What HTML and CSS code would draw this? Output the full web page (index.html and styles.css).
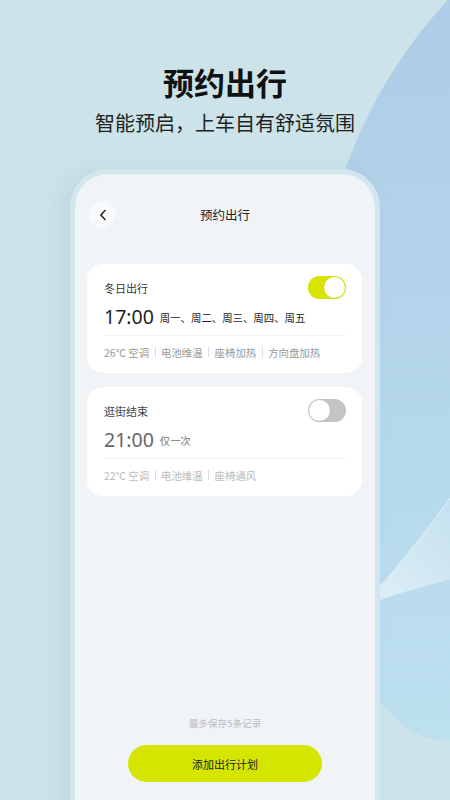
FILE: index.html
```
<!DOCTYPE html>
<html lang="zh-CN">
<head>
<meta charset="utf-8">
<title>预约出行</title>
<link rel="stylesheet" href="styles.css">
</head>
<body>
<div class="page">
  <svg class="bg" width="450" height="800" viewBox="0 0 450 800" aria-hidden="true">
    <defs>
      <linearGradient id="blue" x1="0" y1="0" x2="0" y2="1">
        <stop offset="0" stop-color="#adcde6"/>
        <stop offset="0.6" stop-color="#b6d8ec"/>
        <stop offset="1" stop-color="#bde0ef"/>
      </linearGradient>
      <linearGradient id="streak" x1="0" y1="1" x2="1" y2="0">
        <stop offset="0" stop-color="#ffffff" stop-opacity="0.55"/>
        <stop offset="1" stop-color="#ffffff" stop-opacity="0.15"/>
      </linearGradient>
    </defs>
    <path d="M448 0 C392 60 322 165 316 330 C305 520 340 700 420 735 C435 742 450 742 455 740 L455 0 Z" fill="url(#blue)"/>
    <path d="M375 592 C400 565 430 525 455 492 L455 578 C430 585 400 592 375 602 Z" fill="url(#streak)"/>
    <path d="M375 592 C400 565 430 525 455 492" stroke="#e6f3f8" stroke-width="1" fill="none" opacity="0.8"/>
  </svg>

  <header class="hero">
    <h1 class="hero-title">预约出行</h1>
    <p class="hero-sub">智能预启，上车自有舒适氛围</p>
  </header>

  <div class="phone">
    <div class="screen">
      <div class="nav">
        <button class="back" aria-label="返回">
          <svg width="8" height="12" viewBox="0 0 8 12"><path d="M6 1.5 L1.8 6 L6 10.5" stroke="#222" stroke-width="1.5" fill="none" stroke-linecap="round" stroke-linejoin="round"/></svg>
        </button>
        <div class="nav-title">预约出行</div>
      </div>

      <div class="cards">
        <div class="card">
          <div class="card-head">
            <span class="card-title">冬日出行</span>
            <span class="toggle on"><span class="knob"></span></span>
          </div>
          <div class="time-row">
            <span class="time">17:00</span>
            <span class="repeat">周一、周二、周三、周四、周五</span>
          </div>
          <div class="divider"></div>
          <div class="features">
            <span>26℃ 空调</span><i class="sep"></i><span>电池维温</span><i class="sep"></i><span>座椅加热</span><i class="sep"></i><span>方向盘加热</span>
          </div>
        </div>

        <div class="card off">
          <div class="card-head">
            <span class="card-title">逛街结束</span>
            <span class="toggle"><span class="knob"></span></span>
          </div>
          <div class="time-row">
            <span class="time">21:00</span>
            <span class="repeat">仅一次</span>
          </div>
          <div class="divider"></div>
          <div class="features">
            <span>22℃ 空调</span><i class="sep"></i><span>电池维温</span><i class="sep"></i><span>座椅通风</span>
          </div>
        </div>
      </div>

      <p class="note">最多保存5条记录</p>
      <button class="add">添加出行计划</button>
    </div>
  </div>
</div>
</body>
</html>
```

FILE: styles.css
```
* { box-sizing: border-box; }
html, body { margin: 0; padding: 0; }
body {
  font-family: "Noto Sans", "Noto Sans CJK SC", sans-serif;
  background: #cce4e9;
}
.page {
  position: relative;
  width: 450px;
  height: 800px;
  overflow: hidden;
  background: #cce4e9;
}
.bg {
  position: absolute;
  left: 0;
  top: 0;
  z-index: 0;
}
.hero {
  position: relative;
  z-index: 1;
  text-align: center;
  padding-top: 61px;
}
.hero-title {
  margin: 0;
  font-family: "Noto Sans CJK SC", sans-serif;
  font-size: 31px;
  line-height: 42px;
  font-weight: 700;
  color: #111;
}
.hero-sub {
  margin: 0;
  margin-top: 7px;
  font-family: "Noto Sans CJK SC", sans-serif;
  font-size: 20px;
  line-height: 26px;
  font-weight: 400;
  color: #222;
}
.phone {
  position: relative;
  z-index: 1;
  width: 310px;
  margin: 33px auto 0;
  border: 5px solid #d2e7ed;
  border-bottom: none;
  border-radius: 38px 38px 0 0;
  box-shadow: -10px 0 22px rgba(40, 90, 110, 0.08);
}
.screen {
  background: #f0f4f7;
  border-radius: 33px 33px 0 0;
  height: 680px;
  padding-top: 27px;
  display: flex;
  flex-direction: column;
}
.nav {
  position: relative;
  height: 27px;
  display: flex;
  align-items: center;
  justify-content: center;
}
.back {
  position: absolute;
  left: 14px;
  top: 0;
  width: 27px;
  height: 27px;
  border-radius: 50%;
  border: none;
  padding: 0;
  background: #f8fafb;
  display: flex;
  align-items: center;
  justify-content: center;
}
.nav-title {
  font-family: "Noto Sans CJK SC", sans-serif;
  font-size: 12.5px;
  color: #222;
}
.cards {
  margin: 36px 13px 0 12px;
  display: flex;
  flex-direction: column;
  gap: 14px;
}
.card {
  background: #fff;
  border-radius: 16px;
  padding: 12px 16px 14px 17px;
}
.card-head {
  display: flex;
  align-items: center;
  justify-content: space-between;
  height: 23px;
}
.card-title {
  font-family: "Noto Sans CJK SC", sans-serif;
  font-size: 11px;
  color: #333;
}
.toggle {
  position: relative;
  width: 38px;
  height: 23px;
  border-radius: 12px;
  background: #c4c4c4;
}
.toggle .knob {
  position: absolute;
  top: 1px;
  left: 1px;
  width: 21px;
  height: 21px;
  border-radius: 50%;
  background: #fff;
  box-shadow: 0 0 0 0.5px rgba(0,0,0,0.05);
}
.toggle.on { background: #d5e500; }
.toggle.on .knob { left: 16px; }
.time-row {
  margin-top: 4px;
  height: 26px;
  display: flex;
  align-items: center;
}
.time {
  font-size: 19.5px;
  color: #1e1e1e;
  margin-right: 6px;
}
.repeat {
  font-family: "Noto Sans CJK SC", sans-serif;
  font-size: 10.4px;
  color: #222;
  padding-top: 2px;
}
.divider {
  margin-top: 6px;
  height: 1px;
  background: #f1f2f3;
}
.features {
  margin-top: 9px;
  height: 14px;
  display: flex;
  align-items: center;
  font-family: "Noto Sans CJK SC", sans-serif;
  font-size: 10.4px;
  color: #999;
}
.sep {
  display: inline-block;
  width: 1px;
  height: 10px;
  background: #dcdcdc;
  margin: 0 5.5px;
}
.card.off .card-title { color: #444; }
.card.off .time { color: #666; }
.card.off .repeat { color: #777; }
.card.off .features { color: #bbb; }
.note {
  margin: 220px 0 0;
  text-align: center;
  font-family: "Noto Sans CJK SC", sans-serif;
  font-size: 9.6px;
  line-height: 14px;
  color: #bbb;
}
.add {
  align-self: center;
  margin-top: 15px;
  width: 194px;
  height: 37px;
  border: none;
  border-radius: 19px;
  background: #d5e500;
  font-family: "Noto Sans CJK SC", sans-serif;
  font-size: 11px;
  color: #222;
}
```
